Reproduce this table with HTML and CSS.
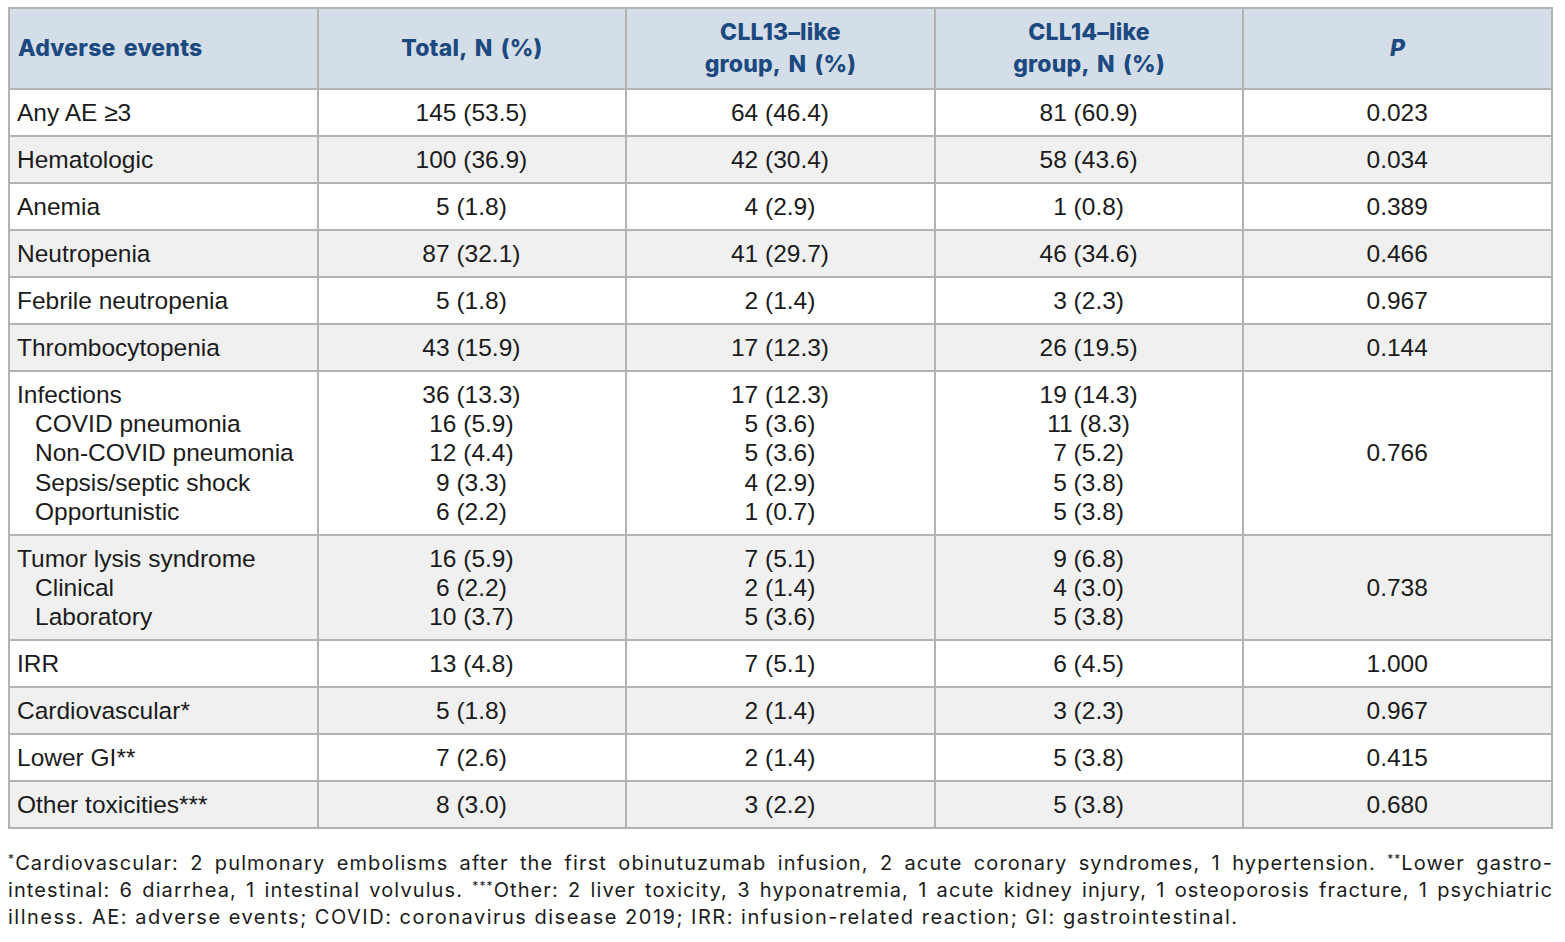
FILE: index.html
```html
<!DOCTYPE html>
<html>
<head>
<meta charset="utf-8">
<link rel="stylesheet" href="styles.css">
</head>
<body>
<div class="page">
<table class="ae-table">
  <colgroup>
    <col class="c1"><col><col><col><col>
  </colgroup>
  <thead>
    <tr>
      <th class="first">Adverse events</th>
      <th>Total, N (%)</th>
      <th>CLL13–like<br>group, N (%)</th>
      <th>CLL14–like<br>group, N (%)</th>
      <th><i>P</i></th>
    </tr>
  </thead>
  <tbody>
    <tr><td class="first">Any AE ≥3</td><td>145 (53.5)</td><td>64 (46.4)</td><td>81 (60.9)</td><td>0.023</td></tr>
    <tr class="alt"><td class="first">Hematologic</td><td>100 (36.9)</td><td>42 (30.4)</td><td>58 (43.6)</td><td>0.034</td></tr>
    <tr><td class="first">Anemia</td><td>5 (1.8)</td><td>4 (2.9)</td><td>1 (0.8)</td><td>0.389</td></tr>
    <tr class="alt"><td class="first">Neutropenia</td><td>87 (32.1)</td><td>41 (29.7)</td><td>46 (34.6)</td><td>0.466</td></tr>
    <tr><td class="first">Febrile neutropenia</td><td>5 (1.8)</td><td>2 (1.4)</td><td>3 (2.3)</td><td>0.967</td></tr>
    <tr class="alt"><td class="first">Thrombocytopenia</td><td>43 (15.9)</td><td>17 (12.3)</td><td>26 (19.5)</td><td>0.144</td></tr>
    <tr>
      <td class="first">Infections<span class="sub">COVID pneumonia</span><span class="sub">Non-COVID pneumonia</span><span class="sub">Sepsis/septic shock</span><span class="sub">Opportunistic</span></td>
      <td>36 (13.3)<br>16 (5.9)<br>12 (4.4)<br>9 (3.3)<br>6 (2.2)</td>
      <td>17 (12.3)<br>5 (3.6)<br>5 (3.6)<br>4 (2.9)<br>1 (0.7)</td>
      <td>19 (14.3)<br>11 (8.3)<br>7 (5.2)<br>5 (3.8)<br>5 (3.8)</td>
      <td>0.766</td>
    </tr>
    <tr class="alt">
      <td class="first">Tumor lysis syndrome<span class="sub">Clinical</span><span class="sub">Laboratory</span></td>
      <td>16 (5.9)<br>6 (2.2)<br>10 (3.7)</td>
      <td>7 (5.1)<br>2 (1.4)<br>5 (3.6)</td>
      <td>9 (6.8)<br>4 (3.0)<br>5 (3.8)</td>
      <td>0.738</td>
    </tr>
    <tr><td class="first">IRR</td><td>13 (4.8)</td><td>7 (5.1)</td><td>6 (4.5)</td><td>1.000</td></tr>
    <tr class="alt"><td class="first">Cardiovascular*</td><td>5 (1.8)</td><td>2 (1.4)</td><td>3 (2.3)</td><td>0.967</td></tr>
    <tr><td class="first">Lower GI**</td><td>7 (2.6)</td><td>2 (1.4)</td><td>5 (3.8)</td><td>0.415</td></tr>
    <tr class="alt"><td class="first">Other toxicities***</td><td>8 (3.0)</td><td>3 (2.2)</td><td>5 (3.8)</td><td>0.680</td></tr>
  </tbody>
</table>
<div class="notes">
  <span class="line just"><sup>*</sup>Cardiovascular: 2 pulmonary embolisms after the first obinutuzumab infusion, 2 acute coronary syndromes, 1 hypertension. <sup>**</sup>Lower gastro-</span>
  <span class="line just">intestinal: 6 diarrhea, 1 intestinal volvulus. <sup>***</sup>Other: 2 liver toxicity, 3 hyponatremia, 1 acute kidney injury, 1 osteoporosis fracture, 1 psychiatric</span>
  <span class="line last">illness. AE: adverse events; COVID: coronavirus disease 2019; IRR: infusion-related reaction; GI: gastrointestinal.</span>
</div>
</div>
</body>
</html>
```

FILE: styles.css
```css
html, body {
  margin: 0;
  padding: 0;
  background: #ffffff;
}

.page {
  padding: 7px 12px 0 8px;
}

.ae-table {
  width: 1545px;
  border-collapse: collapse;
  table-layout: fixed;
  font-family: "Liberation Sans", Arial, sans-serif;
  font-size: 24.5px;
  color: #1b1b1b;
}

.ae-table th,
.ae-table td {
  border: 2px solid #b3b3b3;
  text-align: center;
  vertical-align: middle;
}

.ae-table th {
  background: #d4dee8;
  color: #1c4a80;
  font-family: Inter, "Open Sans", sans-serif;
  font-weight: 800;
  font-size: 23px;
  line-height: 32px;
  height: 77px;
  padding: 0 8px 2px 8px;
  letter-spacing: 0.2px;
  word-spacing: 3px;
}

.ae-table th.first {
  text-align: left;
}

.ae-table td {
  line-height: 29.2px;
  padding: 8px 8px 7.8px 7px;
}

.ae-table td.first {
  text-align: left;
}

.ae-table tr.alt td {
  background: #f0f0f1;
}

.sub {
  display: block;
  padding-left: 18px;
}

.notes {
  margin-top: 21px;
  width: 1545px;
  font-family: Inter, "Open Sans", sans-serif;
  font-size: 20px;
  line-height: 27px;
  color: #1b1b1b;
}

.notes .line {
  display: block;
  white-space: nowrap;
}

.notes .line.just {
  letter-spacing: 1.1px;
  text-align: justify;
  text-align-last: justify;
}

.notes .line.last {
  letter-spacing: 1.5px;
}

.notes sup {
  font-size: 12px;
  vertical-align: 7px;
  line-height: 0;
}
```
